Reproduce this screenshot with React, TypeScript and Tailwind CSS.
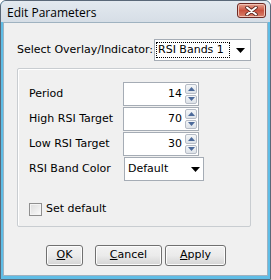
import React from 'react';

const font = { fontFamily: '"DejaVu Sans", Verdana, sans-serif' };

const SpinBox = ({ value }: { value: string }) => (
  <div className="flex w-[76px] h-[24px] border border-[#a5acb5] bg-white">
    <div className="flex-1 flex items-center justify-end pr-[3px] text-[11px] text-black">{value}</div>
    <div className="flex flex-col w-[12px] my-[1px] mr-[1px] gap-[1px]">
      <div className="flex-1 flex items-center justify-center border border-[#b6bcc6] rounded-[2px] bg-gradient-to-b from-[#f4f6f8] to-[#dde2e8]">
        <svg width="7" height="4" viewBox="0 0 7 4"><path d="M3.5 0L7 4H0z" fill="#4c6a9a" /></svg>
      </div>
      <div className="flex-1 flex items-center justify-center border border-[#b6bcc6] rounded-[2px] bg-gradient-to-b from-[#f4f6f8] to-[#dde2e8]">
        <svg width="7" height="4" viewBox="0 0 7 4"><path d="M0 0H7L3.5 4z" fill="#4c6a9a" /></svg>
      </div>
    </div>
  </div>
);

const Arrow = () => (
  <svg width="9" height="5" viewBox="0 0 9 5"><path d="M0 0H9L4.5 5z" fill="#000" /></svg>
);

const Btn = ({ w, mn, rest }: { w: string; mn: string; rest: string }) => (
  <div className={`${w} h-[21px] flex items-center justify-center rounded-[3px] border border-[#707070] bg-gradient-to-b from-[#f2f2f2] via-[#ebebeb] to-[#d4d4d4] shadow-[inset_0_0_0_1px_#fcfcfc] text-[11px] text-black`}>
    <span><span className="underline">{mn}</span>{rest}</span>
  </div>
);

export default function App() {
  return (
    <div className="w-[271px] h-[280px] flex flex-col border border-[#5a6878] rounded-t-[6px] bg-[#5fbde6] overflow-hidden" style={font}>
      <div className="h-[21px] shrink-0 flex items-center justify-between pl-[6px] pr-[4px] bg-gradient-to-b from-[#e3e9ef] to-[#d6dee6]">
        <span className="text-[12px] text-black mt-[2px]" style={{ fontFamily: '"Open Sans", "Noto Sans", sans-serif' }}>Edit Parameters</span>
        <div className="w-[29px] h-[15px] mt-[-2px] flex items-center justify-center rounded-[3px] border border-[#6e2a24] bg-gradient-to-b from-[#e5a493] via-[#c9523f] to-[#d8806b] shadow-[inset_0_0_0_1px_#f0c2b4]">
          <svg width="13" height="10" viewBox="0 0 13 10">
            <path d="M2 1.5L11 8.5M11 1.5L2 8.5" stroke="#5a2a22" strokeWidth="3.6" strokeLinecap="round" />
            <path d="M2 1.5L11 8.5M11 1.5L2 8.5" stroke="#fff" strokeWidth="2" strokeLinecap="round" />
          </svg>
        </div>
      </div>
      <div className="flex-1 flex px-[2px] pb-[3px]">
        <div className="flex-1 flex flex-col bg-[#f0f0f0] border border-[#9fb2c0] pt-[16px] pl-[13px] text-[11px] text-black">
          <div className="flex items-center h-[22px]">
            <span className="w-[137px]">Select Overlay/Indicator:</span>
            <div className="w-[97px] h-[22px] flex items-center border border-[#a5acb5] bg-white pl-[1px]">
              <div className="h-[16px] w-[74px] flex items-center px-[1px] border border-dotted border-black">RSI Bands 1</div>
              <div className="flex-1 flex justify-center"><Arrow /></div>
            </div>
          </div>
          <div className="mt-[7px] w-[234px] h-[159px] border border-[#c9cdd1] rounded-[2px] shadow-[inset_1px_1px_0_#fff] pt-[13px] pl-[11px] flex flex-col">
            <div className="flex items-center h-[24px]">
              <span className="w-[94px]">Period</span>
              <SpinBox value="14" />
            </div>
            <div className="flex items-center h-[24px] mt-[1px]">
              <span className="w-[94px]">High RSI Target</span>
              <SpinBox value="70" />
            </div>
            <div className="flex items-center h-[24px] mt-[1px]">
              <span className="w-[94px]">Low RSI Target</span>
              <SpinBox value="30" />
            </div>
            <div className="flex items-center h-[24px] mt-[1px]">
              <span className="w-[95px]">RSI Band Color</span>
              <div className="w-[80px] h-[24px] flex items-center border border-[#a5acb5] bg-white pl-[3px]">
                <span className="flex-1">Default</span>
                <div className="w-[16px] flex justify-center"><Arrow /></div>
              </div>
            </div>
            <div className="flex items-center mt-[22px] h-[13px]">
              <div className="w-[13px] h-[13px] border border-[#8f8f8f] bg-gradient-to-br from-[#dcdcdc] to-[#fbfbfb] shadow-[inset_0_0_0_1px_#f4f4f4]" />
              <span className="ml-[4px]">Set default</span>
            </div>
          </div>
          <div className="flex items-center mt-[18px] pl-[29px]">
            <Btn w="w-[37px]" mn="O" rest="K" />
            <div className="w-[12px]" />
            <Btn w="w-[67px]" mn="C" rest="ancel" />
            <div className="w-[3px]" />
            <Btn w="w-[61px]" mn="A" rest="pply" />
          </div>
        </div>
      </div>
    </div>
  );
}
